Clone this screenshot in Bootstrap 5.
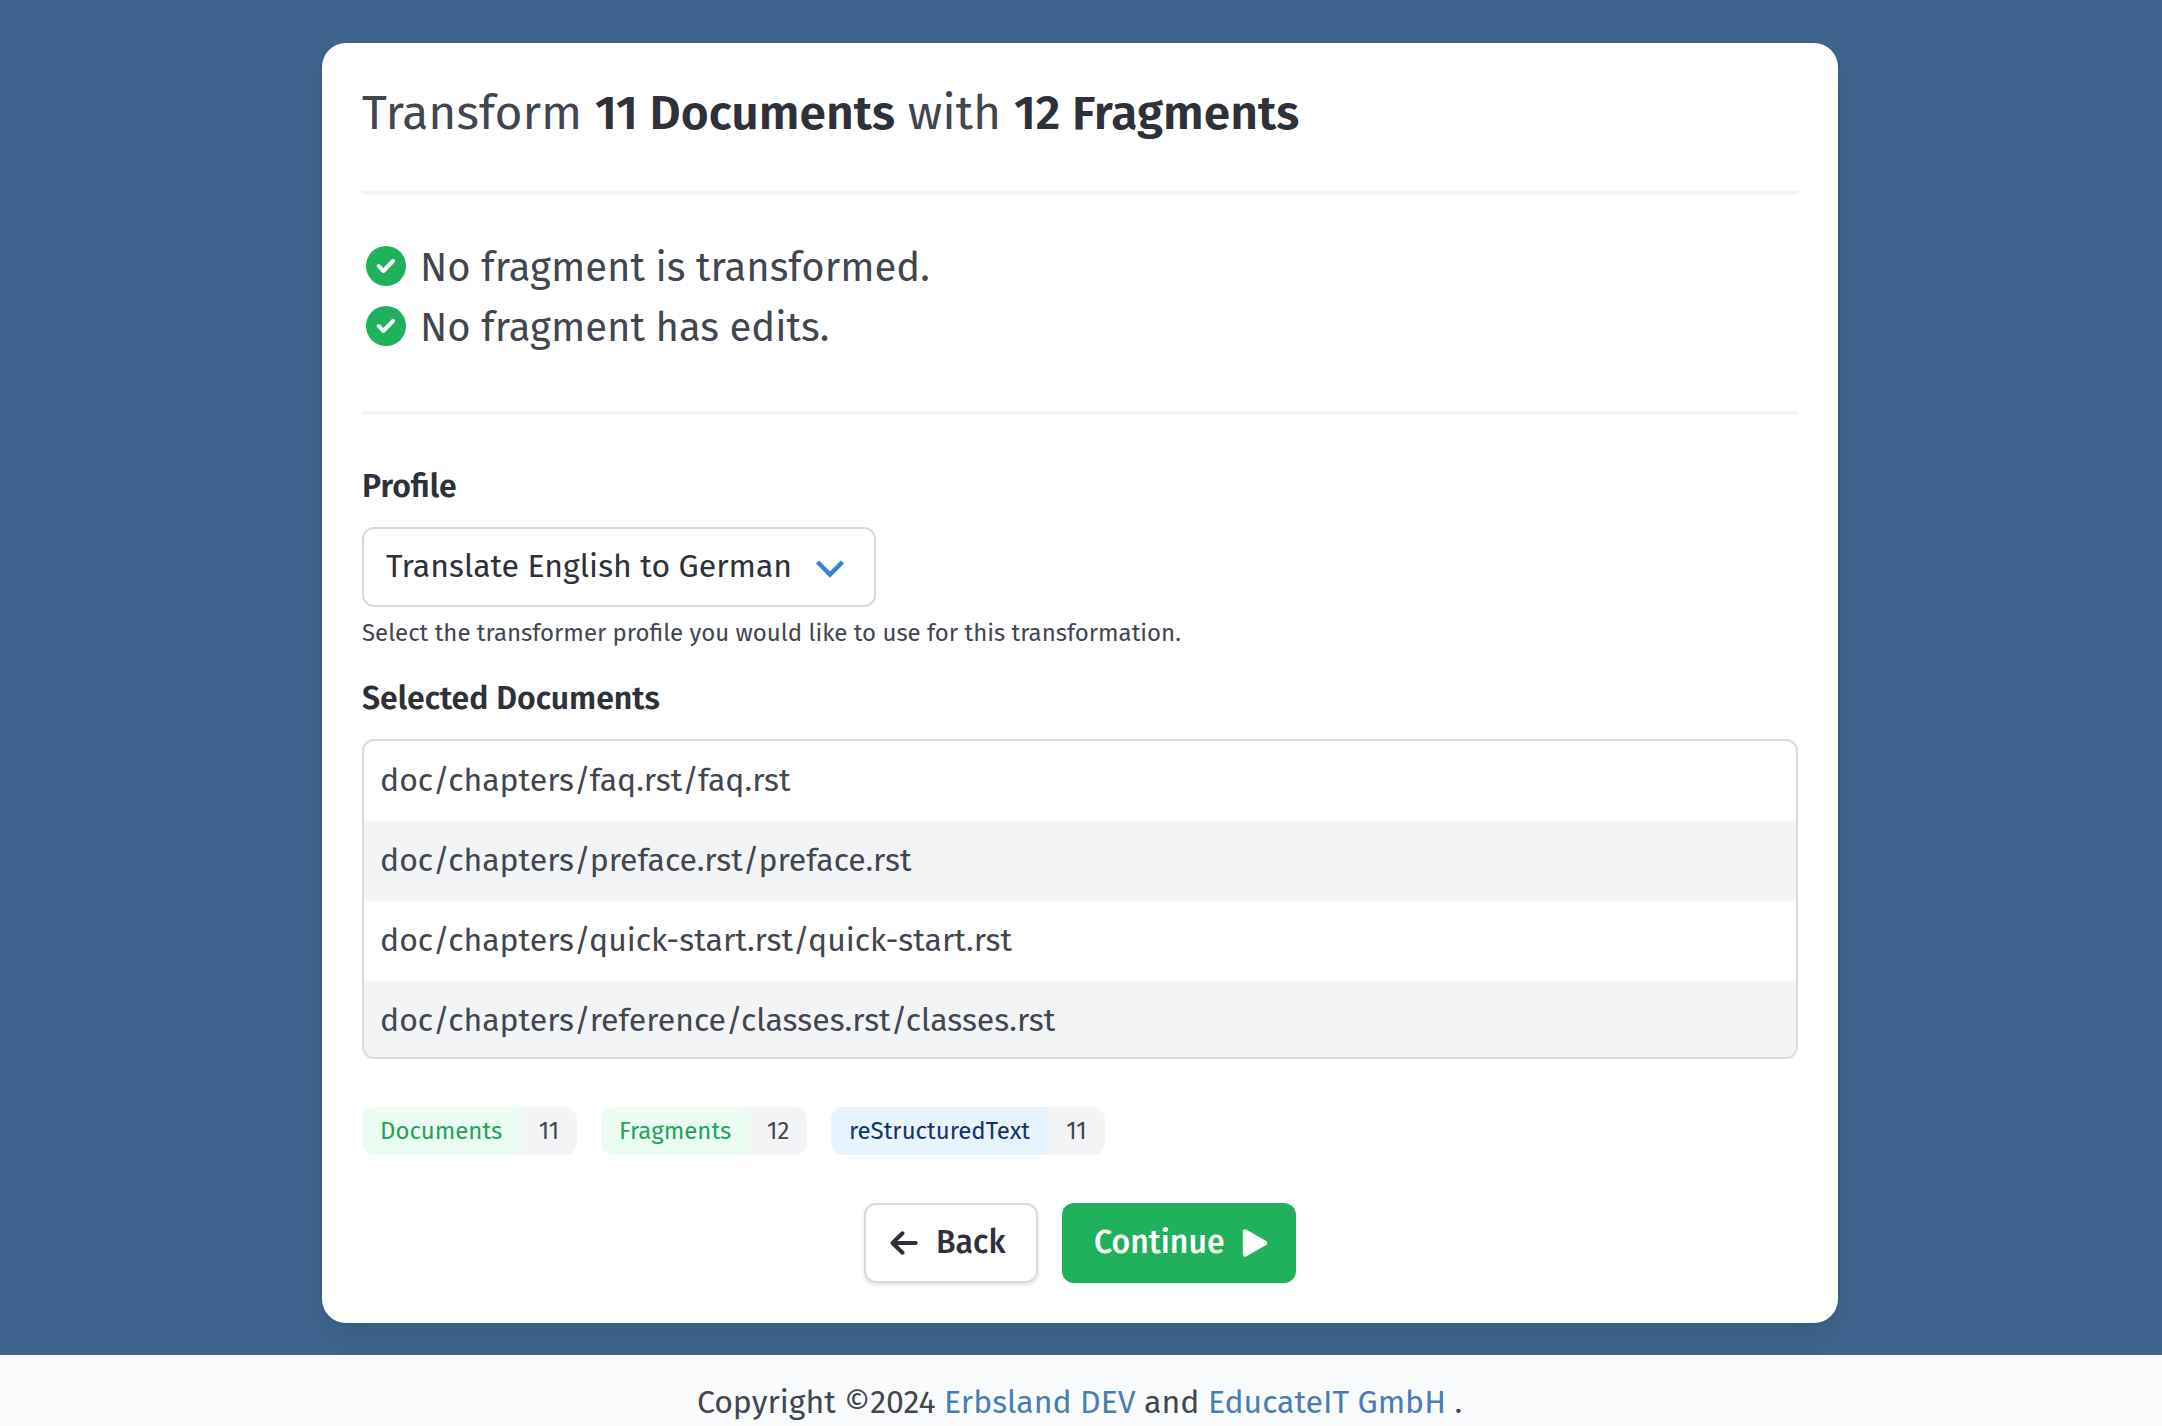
<!DOCTYPE html>
<html lang="en">
<head>
<meta charset="utf-8">
<meta name="viewport" content="width=device-width, initial-scale=1">
<title>Transform Documents</title>
<link href="https://cdn.jsdelivr.net/npm/bootstrap@5.3.0/dist/css/bootstrap.min.css" rel="stylesheet">
<style>
body{font-family:"Fira Sans","Open Sans",sans-serif;font-size:32px;line-height:48px;color:#42464f;background:#3f648f;overflow:hidden}
.page-area{height:1355px;padding-top:43px;padding-left:322px}
.panel{width:1516px;height:1280px;padding:40px;border-radius:24px;background:#fff;box-shadow:0 16px 32px -4px rgba(10,50,60,.15),0 0 0 2px rgba(10,30,60,.02)}
.panel-title{font-size:48px;font-weight:400;line-height:56px;margin:2px 0 50px;color:#42464f}
.panel-title strong,.field-label{font-weight:600;color:#2e3138}
.rule{height:4px;background:#f3f4f6}
.checks{font-size:40px;line-height:60px;margin:41px 0 55px}
.checks li{height:60px;padding-left:4px;gap:14px}
.checks span{padding-top:3px}
.rule + .field-label{margin-top:47px}
.picker{width:514px;height:80px;border:2px solid #d8dadd;border-radius:12px;margin-top:17px;padding:0 29px 2px 22px;color:#2e3138}
.picker svg{margin-top:6px}
.hint{font-size:24px;line-height:36px;margin:8px 0 23px}
.doc-list{height:320px;border:2px solid #d8dadd;border-radius:12px;margin-top:17px;overflow:hidden}
.doc-list .list-group-item{height:80px;border:0;padding:0 16px 2px;color:#42464f;background:#fff;flex:none}
.doc-list .list-group-item:nth-child(even){background:#f3f4f6}
.tags-row{gap:24px;margin-top:48px;font-size:24px}
.pill{height:48px;border-radius:12px;overflow:hidden}
.pill span{height:48px;line-height:48px;padding:0 18px}
.pill .pill-count{background:#f3f4f6;color:#42464f;text-align:center;padding:0}
.pill-green{background:#ebfdf3;color:#25a25a}
.pill-blue{background:#e7f3fd;color:#12346a}
.actions{gap:24px;margin-top:48px}
.actions .btn{height:80px;border-radius:12px;font-size:32px;font-weight:500;line-height:48px}
.actions .btn span{padding-bottom:2px}
.btn-back{width:174px;border:2px solid #d8dadd;background:#fff;color:#2e3138;box-shadow:0 2px 4px rgba(20,30,50,.12);gap:18px;padding:0 0 0 24px}
.btn-go{width:234px;border:0;background:#20b15c;color:#fff;padding:0 28px 0 32px}
.site-footer{height:71px;background:#fafbfd;padding:23px 3px 0 0}
.site-footer a{color:#4a7db5;text-decoration:none}
</style>
</head>
<body>
<main class="page-area">
  <section class="panel d-flex flex-column">
    <h1 class="panel-title">Transform <strong>11 Documents</strong> with <strong>12 Fragments</strong></h1>
    <div class="rule"></div>
    <ul class="checks list-unstyled">
      <li class="d-flex align-items-center"><svg width="40" height="40" viewBox="0 0 40 40"><circle cx="20" cy="20" r="20" fill="#20b15c"/><path d="M12.700 20l4.600 5 9.700-10" fill="none" stroke="#fff" stroke-width="4" stroke-linecap="round" stroke-linejoin="round"/></svg><span>No fragment is transformed.</span></li>
      <li class="d-flex align-items-center"><svg width="40" height="40" viewBox="0 0 40 40"><circle cx="20" cy="20" r="20" fill="#20b15c"/><path d="M12.700 20l4.600 5 9.700-10" fill="none" stroke="#fff" stroke-width="4" stroke-linecap="round" stroke-linejoin="round"/></svg><span>No fragment has edits.</span></li>
    </ul>
    <div class="rule"></div>
    <div class="field-label">Profile</div>
    <div class="picker d-flex align-items-center justify-content-between" role="combobox"><span>Translate English to German</span><svg width="30" height="20" viewBox="0 0 30 20"><path d="M2.500 3L15 15.500 27.500 3" fill="none" stroke="#3584d8" stroke-width="4.500"/></svg></div>
    <p class="hint">Select the transformer profile you would like to use for this transformation.</p>
    <div class="field-label">Selected Documents</div>
    <div class="doc-list list-group">
      <div class="list-group-item d-flex align-items-center">doc/chapters/faq.rst/faq.rst</div>
      <div class="list-group-item d-flex align-items-center">doc/chapters/preface.rst/preface.rst</div>
      <div class="list-group-item d-flex align-items-center">doc/chapters/quick-start.rst/quick-start.rst</div>
      <div class="list-group-item d-flex align-items-center">doc/chapters/reference/classes.rst/classes.rst</div>
    </div>
    <div class="tags-row d-flex">
      <div class="pill d-flex" style="width:215px"><span class="pill-green flex-fill">Documents</span><span class="pill-count" style="width:56px">11</span></div>
      <div class="pill d-flex" style="width:206px"><span class="pill-green flex-fill">Fragments</span><span class="pill-count" style="width:58px">12</span></div>
      <div class="pill d-flex" style="width:274px"><span class="pill-blue flex-fill">reStructuredText</span><span class="pill-count" style="width:57px">11</span></div>
    </div>
    <div class="actions d-flex justify-content-center">
      <button class="btn btn-back d-flex align-items-center"><svg width="28" height="24" viewBox="0 0 28 24"><path d="M12.500 2.300L2.500 12l10 9.700M3 12h22.700" fill="none" stroke="#2e3138" stroke-width="4" stroke-linecap="round" stroke-linejoin="round"/></svg><span>Back</span></button>
      <button class="btn btn-go d-flex align-items-center justify-content-between"><span>Continue</span><svg width="26" height="28" viewBox="0 0 26 28"><path d="M3 2.500v23L23 14z" fill="#fff" stroke="#fff" stroke-width="4.500" stroke-linejoin="round"/></svg></button>
    </div>
  </section>
</main>
<footer class="site-footer text-center">Copyright ©2024 <a href="#">Erbsland DEV</a> and <a href="#">EducateIT GmbH</a> .</footer>
<script src="https://cdn.jsdelivr.net/npm/bootstrap@5.3.0/dist/js/bootstrap.bundle.min.js"></script>
</body>
</html>
